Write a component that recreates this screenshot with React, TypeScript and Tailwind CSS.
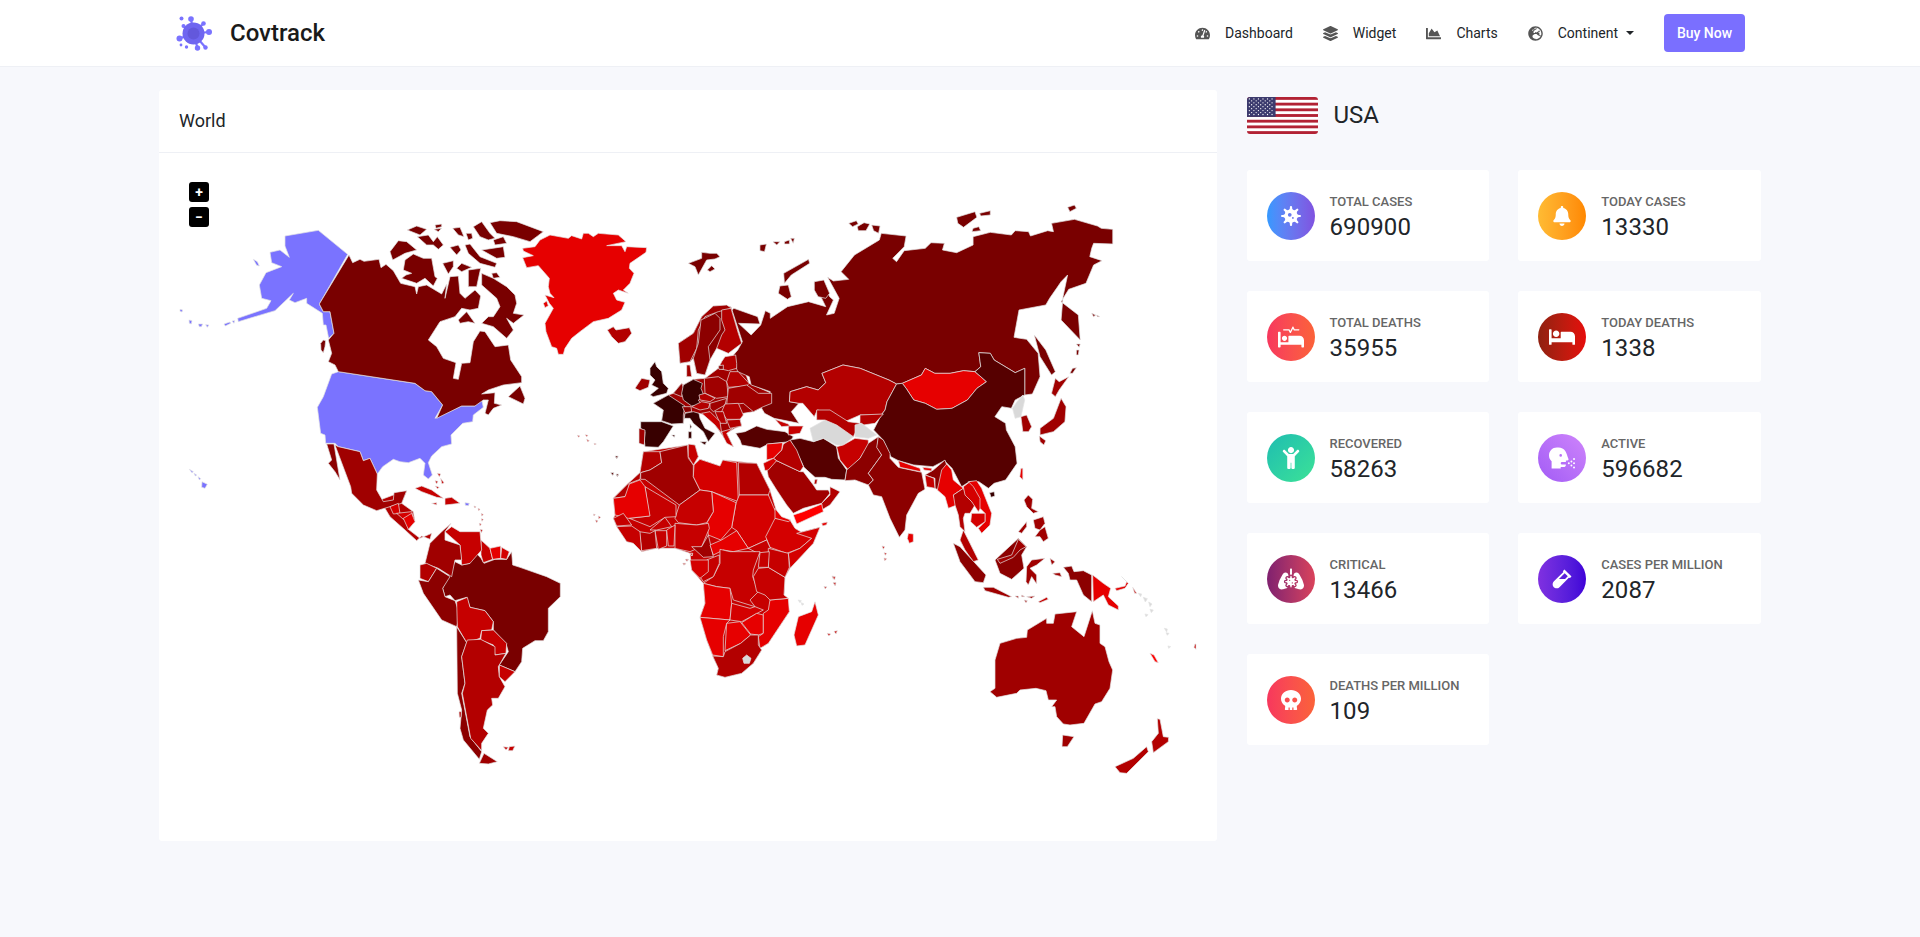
import React from "react";
import {
  FaTachometerAlt, FaLayerGroup, FaChartArea, FaGlobeEurope, FaVirus, FaBell, FaProcedures, FaBed,
  FaChild, FaHeadSideCough, FaLungsVirus, FaVial, FaSkull,
} from "react-icons/fa";

const R0 = "#ff0000", R1 = "#e60000", R2 = "#d40000", R3 = "#c60000", R4 = "#b30000", R5 = "#a00000", R6 = "#8c0000", R7 = "#790000", R8 = "#560000", R9 = "#380000";
const US = "#7a73ff", GR = "#d9d9d9";

type Poly = [string, string];
type Group = { t: string; polys: Poly[] };

const groups: Group[] = [
  {
    t: "translate(380 480) scale(0.33333)",
    polys: [
      [R3, "700,55 745,10 780,-22 790,-85 922,-105 945,-105 955,-70 940,-45 960,-62 1020,-42 1028,-60 1130,-50 1170,30 1195,110 1250,160 1320,142 1300,190 1230,265 1215,292 1212,345 1228,395 1165,490 1140,505 1145,510 1120,550 1085,580 1035,592 1010,585 1015,565 998,528 980,480 960,412 975,370 970,310 935,270 930,220 885,205 830,205 785,215 760,190 710,140 700,115 705,105"],
      [R4, "0,60 40,45 80,33 65,70 100,95 105,125 85,148 120,175 155,160 150,178 125,168 110,182 75,150 30,110"],
    ],
  },
  {
    t: "translate(625 300) scale(0.33333)",
    polys: [
      [R5, "85,310 130,285 145,280 170,250 175,255 205,238 240,235 280,205 300,170 345,170 372,250 440,280 440,310 415,320 385,335 355,340 345,358 350,378 330,385 305,400 325,440 295,410 270,375 240,345 222,340 180,340 175,370 140,372 110,362 115,330"],
      [R6, "160,130 205,100 230,50 265,18 318,20 340,100 350,130 310,160 290,150 275,145 255,180 240,225 215,220 205,175 195,185 165,190"],
    ],
  },
  {
    t: "translate(160 170) scale(0.33333)",
    polys: [
      [US, "375,198 475,181 563,253 478,402 490,425 510,425 522,490 506,505 498,465 490,465 487,430 440,400 440,385 405,398 388,390 400,370 345,422 235,455 233,445 320,415 333,392 305,385 298,345 318,308 365,290 335,278 330,247 360,240 388,262 375,228"],
      [US, "280,268 292,275 298,288 290,286"],
      [US, "60,418 68,420 66,426 60,424"], [US, "87,450 96,452 94,462 88,460"], [US, "115,462 128,462 124,470 118,470"], [US, "137,464 147,465 142,472"],
      [US, "192,462 210,456 212,460 196,468"], [US, "216,453 224,452 222,460"],
      [US, "88,898 100,905 96,908"], [US, "102,910 110,915 106,918"], [US, "114,920 122,926 118,930"], [US, "126,935 142,943 135,955 125,952"],
      [US, "515,612 535,605 765,640 795,662 815,665 848,705 825,745 905,708 945,708 965,688 970,712 940,735 938,755 908,760 873,795 875,822 845,830 815,858 805,878 817,915 805,927 790,915 795,880 780,865 745,878 720,875 700,868 668,890 652,912 630,865 610,872 600,845 535,830 525,820 497,820 495,795 482,790 472,712 490,680"],
      [R7, "567,255 578,278 600,268 612,274 657,268 663,293 678,283 700,302 722,340 765,350 770,372 775,350 800,345 845,372 860,342 855,385 870,320 895,318 900,370 915,385 945,360 962,378 955,415 930,420 905,415 885,440 840,455 805,510 830,530 850,565 888,578 880,625 895,628 905,580 930,578 940,515 960,483 975,485 1005,530 1045,525 1052,570 1085,620 1085,638 1030,645 985,660 965,672 1005,668 1003,700 1025,705 1000,715 985,735 975,730 985,690 970,690 945,708 905,708 830,745 848,705 815,665 795,662 765,640 535,605 525,585 505,575 515,550 505,510 522,490 510,425 490,425 478,402"],
      [R7, "965,310 1000,325 1040,350 1065,375 1070,400 1060,430 1092,435 1060,460 1040,445 1060,480 1040,505 1000,470 965,460 985,440 1000,440 1020,410 1010,385 965,345"],
      [R7, "925,300 962,295 950,350 925,350"],
      [R7, "895,450 920,425 945,460 925,455 900,460"],
      [R7, "1045,680 1080,648 1095,685 1090,702"],
      [R7, "742,180 770,168 800,178 780,195"], [R7, "825,165 845,162 845,170 828,175"], [R7, "822,178 845,175 835,185"],
      [R7, "878,175 900,172 912,200 895,195"], [R7, "918,190 935,190 938,205 925,210"],
      [R7, "940,170 965,155 990,190 1005,205 985,210 960,200"], [R7, "990,158 1020,152 1070,155 1150,185 1110,215 1060,200 1010,190"],
      [R7, "772,200 805,195 820,215 832,200 850,225 835,238 820,225 800,225"], [R7, "870,232 895,225 903,240 890,255"],
      [R7, "915,225 930,222 960,260 1010,280 1005,292 960,280 925,250"], [R7, "690,245 715,212 740,215 770,240 735,250 698,270"],
      [R7, "735,270 760,252 790,265 815,265 825,320 832,325 820,348 795,325 770,340 725,325 738,315 755,310 730,300"],
      [R7, "848,280 880,272 880,290 865,312"], [R7, "890,295 905,280 935,292 905,305"], [R7, "965,240 1030,230 1035,262 1010,265"],
      [R7, "1000,210 1030,200 1040,220 1005,225"], [R7, "995,310 1010,308 1020,322 1000,325"],
      [R7, "490,510 497,512 495,530 490,548 483,540 482,520"],
      [R6, "500,822 522,822 540,930 525,905 505,880 515,870"],
      [R5, "525,825 535,830 600,845 610,872 630,865 652,912 650,960 670,995 700,990 702,968 740,962 725,1000 690,1010 650,1022 610,1005 575,970 572,950"],
      [R3, "1252,796 1260,798 1256,802"], [R3, "1276,794 1284,796 1280,800"], [R3, "1280,808 1288,812 1283,815"], [R3, "1302,820 1309,822 1304,824"],
      [R8, "1366,860 1374,862 1370,866"], [R8, "1354,910 1362,912 1358,916"], [R8, "1368,914 1376,916 1372,920"],
      [R3, "832,910 842,912 838,920"], [R3, "825,932 834,934 830,942"], [R3, "842,925 852,938 846,942"], [R3, "826,948 838,952 832,956"],
    ],
  },
  {
    t: "translate(510 215) scale(0.33333)",
    polys: [
      [R1, "38,100 75,95 90,75 120,60 175,70 185,62 215,72 220,55 235,55 250,65 265,55 325,60 348,80 290,92 335,92 345,110 350,95 410,98 408,112 360,145 358,160 372,175 360,205 340,225 355,235 325,225 310,235 320,255 345,262 335,285 295,310 250,320 210,350 185,370 165,400 160,418 145,418 140,400 125,395 108,350 105,325 130,280 118,265 105,240 132,248 120,235 115,215 118,190 85,152 50,158 38,128 70,122 40,108"],
      [R1, "100,265 110,258 115,272 105,278"],
      [R4, "292,345 310,335 318,345 358,338 365,355 345,380 325,385 305,365"],
      [R7, "535,145 575,130 575,112 600,115 620,115 630,125 615,132 590,135 565,180 555,155"],
      [R7, "592,165 605,152 615,162 600,170"],
    ],
  },
  {
    t: "translate(600 200) scale(0.38265 0.33333)",
    polys: [
      [R7, "360,450 372,425 345,330 350,325 412,350 418,372 362,370 395,405 420,375 432,332 445,340 445,355 490,320 545,305 590,320 560,250 585,245 600,290 610,300 592,345 612,340 625,295 595,232 610,243 650,238 630,215 665,165 730,120 735,100 800,108 795,140 765,175 775,185 795,152 850,145 865,128 900,130 895,150 932,158 975,135 975,110 1020,97 1075,105 1085,92 1120,95 1125,108 1170,92 1185,95 1180,70 1240,58 1300,78 1310,85 1340,88 1340,132 1290,130 1285,145 1280,170 1312,182 1290,195 1270,250 1225,268 1205,305 1250,345 1255,420 1205,360 1210,290 1222,225 1205,245 1195,262 1175,295 1165,315 1095,330 1082,412 1115,418 1145,460 1150,530 1130,582 1110,585 1110,505 1085,518 1030,480 1020,460 990,458 995,500 980,515 950,512 915,520 875,520 850,505 840,525 790,550 775,552 755,540 680,505 635,495 580,520 590,548 570,570 540,560 497,575 495,605 520,610 500,635 520,670 455,655 430,640 420,620 440,610 445,575 395,555 390,530 360,515 345,470"],
      [R4, "497,575 540,560 570,570 590,548 580,520 635,495 680,505 755,540 775,552 750,605 745,630 735,645 680,645 640,665 605,640 568,630 560,650 530,610 520,610 495,605"],
      [R1, "790,550 840,525 850,505 875,520 915,520 950,512 980,515 1010,545 985,565 960,600 920,625 880,628 850,610 820,600 800,565"],
      [R8, "775,552 790,550 800,565 820,600 850,610 880,628 920,625 960,600 985,565 1010,545 980,515 995,500 990,458 1020,460 1030,480 1085,518 1110,505 1110,585 1085,600 1075,625 1050,620 1032,650 1060,670 1062,690 1085,740 1090,790 1060,840 1030,850 1015,865 990,845 965,845 945,860 920,805 900,782 870,800 820,795 780,782 760,770 740,720 715,690 735,645 745,630 750,605"],
      [GR, "1105,585 1110,600 1100,650 1085,655 1078,625 1090,605"],
      [R5, "1100,650 1115,645 1128,680 1120,695 1105,695"],
      [R5, "1190,535 1200,545 1225,530 1200,570 1190,590 1180,580"],
      [R5, "1205,595 1218,620 1215,665 1185,695 1150,705 1150,685 1185,655"],
      [R5, "1148,708 1165,722 1160,735 1150,725"],
      [R7, "1135,405 1165,450 1190,515 1180,525 1150,470"],
      [R7, "1245,432 1255,432 1252,442"], [R7, "1245,450 1252,450 1250,465 1245,465"], [R7, "1235,505 1245,503 1235,520 1228,520"],
      [R7, "1285,340 1295,345 1290,350"], [R7, "1298,345 1306,350 1300,350"],
      [R1, "1100,805 1105,805 1105,840 1097,830"],
      [R9, "1018,878 1030,875 1032,888 1022,892"],
      [R7, "650,70 670,62 675,72 660,80"], [R7, "672,80 690,68 705,72 695,92 675,92"], [R7, "710,75 732,78 728,100 715,92"],
      [R7, "932,52 980,35 985,52 950,82 935,70"], [R7, "992,40 1020,32 1020,45 995,48"], [R7, "975,85 990,80 995,92 972,95"], [R7, "1222,22 1240,15 1245,25 1228,35"],
      [R7, "418,135 435,132 430,155 418,152"], [R7, "452,125 470,125 462,135"], [R7, "482,125 495,120 495,132 482,132"], [R7, "498,115 508,115 505,130"],
      [R7, "480,220 545,178 548,190 500,225 482,250"], [R7, "470,258 492,255 500,290 490,298 466,280"], [R7, "560,245 585,240 600,280 590,295 570,290 560,270"],
    ],
  },
  {
    t: "translate(625 300) scale(0.33333)",
    polys: [
      [R5, "160,130 205,100 230,50 265,18 305,15 320,25 280,35 240,50 220,90 215,145 195,185 165,190"],
      [R6, "228,60 270,40 285,55 285,90 250,140 255,180 240,225 215,220 205,175 220,130"],
      [R4, "290,30 318,25 340,100 350,130 310,160 275,145 290,105 300,90 290,60"],
      [R5, "185,195 195,195 200,230 185,230"],
      [R4, "300,170 332,165 335,190 335,205 310,212 280,205 290,185"],
      [R5, "238,235 280,230 305,245 310,290 275,295 240,280"],
      [R4, "315,215 340,215 372,250 365,258 310,262 305,245"],
      [R5, "310,265 365,255 400,280 440,280 440,310 415,320 385,335 355,310 305,315"],
      [R9, "75,205 90,185 95,200 110,215 115,250 130,265 125,280 85,290 75,285 100,265 80,255 90,240 75,225"],
      [R5, "30,265 50,235 75,240 70,262 45,272"],
      [R9, "85,310 130,285 180,318 175,345 175,370 140,372 110,362 115,330"],
      [R9, "47,365 110,365 145,378 115,425 100,442 60,440 58,420 60,395 47,385"],
      [R5, "42,385 60,390 58,435 42,430"],
      [R6, "145,280 170,250 175,262 170,290"],
      [R9, "175,255 205,238 232,250 228,265 238,290 220,300 230,315 200,318 175,300 170,280"],
      [R4, "222,285 240,280 270,295 255,305 225,300"],
      [R4, "200,320 230,305 255,310 250,325 225,330"],
      [R6, "172,320 198,320 200,335 180,338"],
      [R5, "255,310 305,295 300,315 265,335 255,325"],
      [R4, "300,312 340,310 355,345 345,358 305,358 290,335"],
      [R4, "305,360 345,358 350,378 315,385"],
      [R4, "270,335 295,335 305,370 285,370"],
      [R3, "230,340 255,335 285,365 290,400 270,375"],
      [R3, "290,395 325,385 305,400 325,440 305,430 295,410"],
      [R9, "180,340 205,335 222,340 225,355 240,385 270,400 250,425 235,395 205,370 195,355 178,355"],
      [R9, "190,395 200,395 200,415 190,415"], [R9, "225,425 245,425 240,435"], [R9, "195,372 200,380 195,388"], [R9, "140,405 150,405 148,412"],
      [R8, "332,400 360,395 395,378 425,388 480,395 505,410 495,425 430,432 405,445 350,435 345,420"],
      [R3, "450,358 490,372 495,378 470,380"],
      [R3, "490,378 535,378 525,400 490,405"],
      [R6, "280,198 295,195 295,208 282,208"],
    ],
  },
  {
    t: "translate(800 390) scale(0.33333)",
    polys: [
      [R8, "-30,150 0,145 40,155 70,145 110,170 115,205 140,240 135,270 95,268 75,262 45,262 12,232 -10,185"],
      [GR, "30,115 75,90 110,105 160,140 130,165 110,165 70,145 40,155"],
      [R4, "50,60 90,60 145,95 180,100 165,130 160,140 110,105 75,90 50,90"],
      [R4, "180,75 250,72 225,100 190,105 180,100"],
      [GR, "165,105 185,100 230,135 205,145 165,140"],
      [R3, "110,170 130,165 165,145 205,150 205,165 180,205 145,240 120,210"],
      [R6, "140,240 180,205 205,160 235,140 232,172 245,195 205,250 220,270 205,285 165,270 135,272"],
      [R6, "235,140 250,150 270,190 270,205 295,232 365,247 375,298 355,310 320,375 315,420 298,442 270,385 245,320 220,315 205,285 220,270 205,250 245,195 230,172"],
      [R6, "375,255 400,240 435,210 440,225 415,300 405,295 405,265"],
      [R1, "295,212 360,235 362,245 300,232"],
      [R1, "368,232 395,235 395,243 372,240"],
      [R3, "375,255 402,265 405,295 380,290"],
      [R1, "425,240 440,222 455,240 460,270 490,295 475,305 460,315 470,345 445,355 435,320 412,300"],
      [R4, "460,315 475,305 490,295 505,325 525,345 510,370 495,370 490,385 495,425 480,410 475,375 465,345"],
      [R2, "490,290 510,275 540,300 550,340 535,365 515,335 495,315"],
      [R1, "505,275 530,272 545,295 575,370 570,405 545,430 535,415 555,395 555,370 540,355 540,325 520,290"],
      [R2, "515,370 555,370 555,395 530,412 512,395"],
      [R4, "490,420 510,460 535,510 520,515 495,480 480,450"],
      [R1, "325,430 340,432 340,455 328,460 322,445"],
    ],
  },
  {
    t: "translate(600 440) scale(0.33333)",
    polys: [
      [R5, "500,85 530,62 600,95 610,95 640,135 650,150 685,150 690,160 665,190 610,205 580,220 560,195 530,150 505,110"],
      [R4, "690,140 720,155 690,195 665,210 665,190 690,165"],
      [R0, "580,225 610,215 665,192 670,215 590,252"],
      [R4, "550,12 570,0 590,30 610,80 600,95 530,62 520,55 545,30"],
      [R1, "500,12 548,8 545,30 520,55 500,60"],
      [R2, "490,70 520,55 530,62 505,90 495,92"],
      [R4, "40,175 85,130 120,98 130,35 180,35 185,68 150,90 122,98 120,118 88,130 85,155 75,170"],
      [R5, "122,118 122,98 150,90 185,68 180,35 262,15 265,55 280,75 280,110 300,150 238,195 135,118"],
      [R3, "265,12 285,15 295,50 280,75 265,50"],
      [R2, "282,75 300,58 360,78 368,60 410,68 415,185 335,155 300,150 280,110"],
      [R4, "415,68 470,70 510,150 505,165 418,165"],
      [R2, "418,165 505,165 520,200 535,230 505,280 500,300 445,325 410,272 395,262 408,190"],
      [R1, "335,155 408,188 395,262 362,300 325,285 320,250 340,215"],
      [R3, "238,195 300,150 335,155 340,215 320,248 290,255 235,248 225,235"],
      [R3, "135,140 228,195 228,230 195,232 150,260 88,235 148,228"],
      [R1, "40,175 75,170 88,132 120,120 135,140 150,228 85,235 45,225"],
      [R3, "225,250 290,255 325,250 328,265 305,320 270,335 225,325"],
      [R5, "325,285 340,350 310,352 275,320 305,320"],
      [R3, "150,270 195,232 215,260 170,270"],
      [R3, "165,272 200,272 200,318 175,328"],
      [R2, "200,270 225,255 222,318 205,318"],
      [R4, "118,275 150,280 165,272 170,325 125,332"],
      [R3, "50,260 95,258 120,275 125,335 100,310 80,305"],
      [R3, "40,235 70,220 95,255 50,258"],
      [R2, "525,235 570,240 585,265 635,295 600,325 560,340 510,322 497,290"],
      [R2, "590,280 660,262 640,310 570,385 565,340 600,325 635,295"],
      [R3, "445,325 500,300 510,322 505,360 470,338"],
      [R1, "330,315 365,300 410,272 445,325 400,335 370,330 340,345"],
      [R1, "525,205 545,230 572,240 565,245 525,235"],
      [R4, "645,118 652,118 650,132 642,132"], [R1, "665,250 682,246 680,254 668,258"],
      [R3, "268,340 278,340 276,348"], [R3, "258,358 266,358 262,364"], [R3, "250,370 258,370 254,375"],
      [R8, "45,48 55,48 50,54"], [R8, "32,98 42,98 38,106"], [R8, "48,102 56,102 52,108"],
      [R3, "696,408 704,410 700,418"], [R3, "700,428 708,428 704,436"], [R3, "672,440 680,440 676,446"],
    ],
  },
  {
    t: "translate(380 480) scale(0.33333)",
    polys: [
      [R3, "1020,208 1050,215 1140,215 1120,270 1118,290 1135,335 1110,360 1125,380 1060,360 1050,325 1010,320 970,310 1000,290 1020,250"],
      [R3, "980,240 1018,225 1018,250 1000,290 970,305 960,290"],
      [R2, "930,240 985,240 985,275 960,295 935,270"],
      [R1, "970,310 1010,320 1050,325 1055,370 1050,420 960,412 975,370"],
      [R1, "960,412 1050,420 1040,430 1030,470 1030,530 998,525 980,480"],
      [R1, "1040,430 1080,425 1112,465 1082,490 1035,512"],
      [R2, "1055,370 1110,385 1125,380 1150,390 1085,425 1050,420"],
      [R1, "1085,428 1130,400 1150,405 1150,460 1135,465 1112,462"],
      [R1, "1170,360 1225,355 1228,395 1165,490 1140,505 1135,470 1150,460 1150,400 1165,390"],
      [R3, "1135,265 1165,262 1215,292 1212,345 1225,355 1170,360 1155,345 1130,335 1120,290"],
      [R3, "1165,205 1225,220 1228,262 1215,292 1165,262"],
      [R3, "1140,218 1168,215 1165,262 1135,262"],
      [R4, "998,528 1030,530 1035,515 1082,490 1112,465 1135,465 1135,495 1145,510 1120,550 1085,580 1035,592 1010,585 1015,565"],
      [GR, "1088,535 1100,525 1113,535 1108,550 1092,550"],
      [R1, "1305,365 1315,405 1275,495 1250,498 1242,465 1255,410 1295,395"],
      [R3, "1358,290 1366,290 1364,300"], [R3, "1360,308 1368,308 1366,318"], [R3, "1332,320 1340,322 1336,326"],
      [R3, "1342,460 1352,462 1346,468"], [R3, "1362,454 1372,452 1368,462"], [GR, "1254,360 1264,362 1260,368"], [GR, "1264,368 1272,372 1266,376"],
      [R3, "930,220 938,220 936,228"], [R3, "916,238 924,238 920,244"], [R3, "908,250 916,250 912,256"],
      [R7, "188,325 225,245 245,255 270,250 272,232 285,215 303,235 312,250 345,238 380,238 395,215 398,255 420,262 500,290 541,310 541,350 505,385 505,455 490,482 465,482 428,505 425,545 405,575 358,555 385,515 378,490 340,450 340,425 315,392 270,382 260,352 225,362 210,345 195,350"],
      [R3, "303,180 330,205 338,238 310,248 303,225"],
      [R1, "330,205 362,198 362,235 338,238"],
      [R2, "365,202 388,215 380,238 362,235"],
      [R3, "195,155 215,140 240,155 300,155 305,210 270,250 245,255 240,195"],
      [R5, "135,250 150,190 185,155 213,130 195,155 195,180 240,195 245,240 225,240 215,290 175,265"],
      [R4, "120,255 140,250 170,265 145,305 120,295"],
      [R6, "115,300 145,305 170,265 210,290 188,325 195,350 225,362 240,405 230,440 185,420 130,340"],
      [R3, "230,365 262,352 270,382 315,392 340,425 335,450 305,452 300,475 260,488 232,440"],
      [R3, "305,452 340,450 380,490 378,520 345,525 340,495 302,480"],
      [R6, "230,440 260,488 245,530 255,610 245,640 270,770 305,815 298,838 250,780 240,745 245,690 232,640"],
      [R4, "262,480 302,478 345,500 345,525 378,520 355,560 358,590 375,620 355,655 335,655 338,675 322,690 310,745 325,760 305,790 305,812 272,775 247,640 255,610 245,530"],
      [R3, "358,555 405,575 375,605 358,590"],
      [R5, "298,850 312,820 352,845 325,852"],
      [R3, "370,800 385,802 378,810"], [R3, "388,800 405,798 398,812 385,812"], [R4, "237,695 244,695 243,712 238,712"],
      [R2, "30,80 55,70 60,100 40,102"],
      [R2, "50,100 95,95 100,110 70,118"],
      [R1, "70,115 95,100 105,125 85,148"],
      [R3, "105,25 125,18 155,30 190,55 170,52 125,35"],
      [R3, "195,55 215,52 240,70 195,75"],
      [R3, "155,70 170,68 170,75"],
      [US, "255,68 268,70 265,77 256,76"],
      [R3, "282,78 288,80 284,84"], [R3, "294,85 300,88 296,92"], [R3, "304,100 310,104 305,108"], [R3, "304,116 310,118 306,124"], [R3, "298,130 304,132 300,138"], [R3, "300,148 308,150 304,158"],
      [R3, "640,102 646,104 642,108"], [R3, "655,108 662,112 656,116"], [R3, "646,120 654,122 650,128"],
    ],
  },
  {
    t: "translate(880 480) scale(0.33333)",
    polys: [
      [R6, "220,190 240,200 318,285 310,308 285,305 240,245"],
      [R6, "345,240 415,175 440,200 425,225 432,265 395,298 360,280"],
      [R5, "352,238 395,225 415,178 438,200 420,210 400,232 360,250"],
      [R5, "310,322 340,322 395,350 385,352 315,332"],
      [R5, "405,348 415,348 415,355"], [R5, "425,345 435,350 425,350"], [R5, "440,350 465,348 455,355"], [R5, "432,360 442,362 438,368"], [R3, "475,365 500,352 505,358 480,368"],
      [R5, "440,260 455,240 495,235 470,255 450,265 470,285 470,312 455,290 445,315 438,305"],
      [R5, "510,235 525,245 515,255"],
      [R5, "518,280 540,278 545,290 525,285"],
      [R6, "550,262 575,258 582,275 610,272 635,285 635,365 610,345 590,300 570,300 565,280"],
      [R1, "638,285 670,310 692,325 685,350 715,378 715,390 685,375 670,345 640,365"],
      [R1, "705,325 735,318 740,305 725,290 745,310 735,325 710,332"],
      [R3, "758,322 770,340 764,340"],
      [R5, "432,60 445,45 458,58 455,85 475,95 460,100 440,80"],
      [R5, "465,170 480,150 495,140 505,175 490,185 480,170"],
      [R5, "460,120 490,110 495,130 480,150 465,145"],
      [R5, "415,155 440,125 440,140 425,160"],
      [R5, "345,540 360,490 410,475 440,472 442,450 500,415 500,430 520,430 525,402 590,395 575,440 612,470 637,392 645,430 660,435 660,490 675,500 687,545 698,570 690,625 665,665 645,672 612,730 570,735 550,732 530,710 525,680 515,680 530,660 505,660 498,632 468,625 420,630 410,640 350,652 330,635 345,625"],
      [R5, "548,765 582,770 562,800 546,800"],
      [R4, "705,860 760,835 800,800 805,815 740,880 720,878"],
      [R4, "832,716 840,718 850,770 866,772 865,785 820,818 815,785 835,760"],
      [R0, "810,520 822,525 835,548 825,545"], [R3, "945,492 948,492 948,508 942,502"],
      [R3, "6,198 14,200 10,208"], [R3, "12,218 20,220 16,226"], [R3, "12,234 20,236 14,242"],
      [GR, "775,340 785,342 782,350"], [GR, "790,352 802,356 796,366"], [GR, "806,366 816,372 810,380"], [GR, "810,388 820,390 814,398"], [GR, "795,402 804,404 798,410"],
      [GR, "853,445 862,447 860,456"], [GR, "858,458 867,460 862,466"], [GR, "864,498 872,500 866,505"],
    ],
  },
];

function WorldMap() {
  return (
    <svg className="block" width="1058" height="688" viewBox="159 153 1058 688">
      {groups.map((g, i) => (
        <g key={i} transform={g.t}>
          {g.polys.map((p, j) => (
            <polygon key={j} points={p[1]} fill={p[0]} stroke="#e4e4e4" strokeWidth="0.7" strokeLinejoin="round" vectorEffect="non-scaling-stroke" />
          ))}
        </g>
      ))}
    </svg>
  );
}

function Logo() {
  const balls: [number, number, number][] = [[-2.5, -14.5, 2.8], [-12, -15, 2], [10, -10, 2.3], [15.5, -1.5, 3], [12, 14, 2.2], [4, 14.5, 2.7], [-7, 13.5, 1.7], [-12.5, 11.5, 1.4], [-14, 5, 3], [-10, -7.5, 2]];
  return (
    <svg width="37" height="37" viewBox="-18.5 -18.5 37 37" className="shrink-0">
      {balls.map((b, i) => (
        <g key={i}>
          {i !== 1 && i !== 7 && i !== 6 ? <line x1="0" y1="0" x2={b[0]} y2={b[1]} stroke="#7a73ff" strokeWidth="2.2" /> : null}
          <circle cx={b[0]} cy={b[1]} r={b[2]} fill="#7a73ff" />
        </g>
      ))}
      <circle r="11" fill="#6f66f0" />
      <circle r="6" fill="#6358dc" />
    </svg>
  );
}

function Flag() {
  const stripes = Array.from({ length: 7 }, (_, i) => i);
  const stars: [number, number][] = [];
  for (let r = 0; r < 9; r++) {
    for (let c = 0; c < (r % 2 ? 5 : 6); c++) {
      stars.push([2.4 + c * 4.6 + (r % 2 ? 2.3 : 0), 1.9 + r * 1.95]);
    }
  }
  return (
    <svg width="71" height="37" viewBox="0 0 72 37" preserveAspectRatio="none" className="shrink-0 rounded-[3px]">
      <rect width="72" height="37" fill="#fff" />
      {stripes.map((i) => (
        <rect key={i} y={i * 5.69} width="72" height="2.85" fill="#b22234" />
      ))}
      <rect width="29" height="19.9" fill="#3c3b6e" />
      {stars.map((s, i) => (
        <circle key={i} cx={s[0]} cy={s[1]} r="0.65" fill="#fff" />
      ))}
    </svg>
  );
}

function NavItem({ icon, label }: { icon: React.ReactNode; label: string }) {
  return (
    <a className="flex items-center gap-[15px] text-[14px] text-[#212529]">
      <span className="text-[#555] text-[15px]">{icon}</span>
      <span>{label}</span>
    </a>
  );
}

const stats = [
  { label: "TOTAL CASES", value: "690900", icon: <FaVirus className="text-[20px]" />, bg: "bg-linear-to-r from-[#3399ff] to-[#7f52e0]" },
  { label: "TODAY CASES", value: "13330", icon: <FaBell className="text-[20px]" />, bg: "bg-linear-to-r from-[#ffbb33] to-[#ff8800]" },
  { label: "TOTAL DEATHS", value: "35955", icon: <FaProcedures className="text-[26px]" />, bg: "bg-linear-to-r from-[#f7375d] to-[#fb6238]" },
  { label: "TODAY DEATHS", value: "1338", icon: <FaBed className="text-[26px]" />, bg: "bg-linear-to-r from-[#8f2010] to-[#e60b0b]" },
  { label: "RECOVERED", value: "58263", icon: <FaChild className="text-[22px]" />, bg: "bg-linear-to-br from-[#1fbdb0] to-[#3ce296]" },
  { label: "ACTIVE", value: "596682", icon: <FaHeadSideCough className="text-[26px]" />, bg: "bg-linear-to-bl from-[#cf84fb] to-[#a25bf5]" },
  { label: "CRITICAL", value: "13466", icon: <FaLungsVirus className="text-[26px]" />, bg: "bg-linear-to-r from-[#80206f] to-[#da425a]" },
  { label: "CASES PER MILLION", value: "2087", icon: <FaVial className="text-[20px]" />, bg: "bg-linear-to-r from-[#8030e0] to-[#4000d8]" },
  { label: "DEATHS PER MILLION", value: "109", icon: <FaSkull className="text-[20px]" />, bg: "bg-linear-to-r from-[#f7375d] to-[#fb6238]" },
];

export default function App() {
  return (
    <div className="min-h-screen bg-[#f7f8fc] font-['Roboto',sans-serif] text-[#212529]">
      <nav className="h-[67px] bg-white border-b border-[#eef0f5] flex items-center justify-between px-[175px]">
        <div className="flex items-center gap-[18px]">
          <Logo />
          <span className="text-[24px] font-medium text-[#1a1a1a] leading-none">Covtrack</span>
        </div>
        <div className="flex items-center gap-[30px]">
          <NavItem icon={<FaTachometerAlt />} label="Dashboard" />
          <NavItem icon={<FaLayerGroup />} label="Widget" />
          <NavItem icon={<FaChartArea />} label="Charts" />
          <div className="flex items-center gap-[4px]">
            <NavItem icon={<FaGlobeEurope />} label="Continent" />
            <span className="ml-[4px] w-0 h-0 border-x-[4px] border-x-transparent border-t-[4px] border-t-[#212529]" />
          </div>
          <button className="w-[81px] h-[38px] bg-[#7a6fff] rounded-[4px] text-white text-[14px] font-medium">Buy Now</button>
        </div>
      </nav>

      <main className="flex items-start pl-[159px] pt-[23px]">
        <section className="relative w-[1058px] bg-white rounded-[3px] shrink-0">
          <header className="h-[63px] border-b border-[#eef0f5] flex items-center px-[20px] text-[18px] text-[#212529] pb-[1px]">World</header>
          <WorldMap />
          <div className="absolute left-[30px] top-[92px] flex flex-col gap-[5px]">
            <button className="w-[20px] h-[20px] bg-black rounded-[3px] text-white text-[14px] font-bold leading-none flex items-center justify-center">+</button>
            <button className="w-[20px] h-[20px] bg-black rounded-[3px] text-white text-[14px] font-bold leading-none flex items-center justify-center">−</button>
          </div>
        </section>

        <aside className="ml-[29.5px] w-[514.5px] shrink-0">
          <div className="flex items-center gap-[16px] h-[37px] mt-[7px]">
            <Flag />
            <span className="text-[24px] leading-none text-[#212529] mb-[2px]">USA</span>
          </div>
          <div className="grid grid-cols-2 gap-x-[29px] gap-y-[30px] mt-[36px]">
            {stats.map((s) => (
              <div key={s.label} className="h-[91px] bg-white rounded-[3px] flex items-center px-[20px] gap-[15px]">
                <div className={`w-[48px] h-[48px] rounded-full flex items-center justify-center text-white shrink-0 ${s.bg}`}>{s.icon}</div>
                <div className="flex flex-col pt-[3px]">
                  <span className="text-[13px] font-medium text-[#666] leading-[15px]">{s.label}</span>
                  <span className="text-[24px] leading-[28px] mt-[4px] tracking-[0.1px] text-[#212529]">{s.value}</span>
                </div>
              </div>
            ))}
          </div>
        </aside>
      </main>
    </div>
  );
}
